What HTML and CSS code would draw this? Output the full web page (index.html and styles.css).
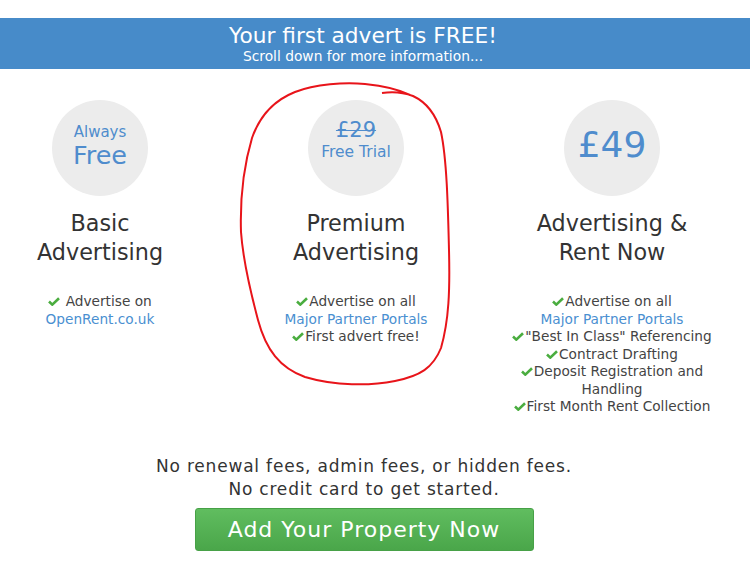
FILE: index.html
```html
<!DOCTYPE html>
<html>
<head>
<meta charset="utf-8">
<link rel="stylesheet" href="styles.css">
</head>
<body>
<div class="page">
  <div class="banner">
    <div class="banner-title">Your first advert is FREE!</div>
    <div class="banner-sub">Scroll down for more information...</div>
  </div>
  <div class="plans">
    <div class="plan">
      <div class="circle">
        <div class="c-small">Always</div>
        <div class="c-mid">Free</div>
      </div>
      <h2 class="plan-title">Basic<br>Advertising</h2>
      <ul class="features">
        <li><svg class="tick" viewBox="0 0 12 9"><path d="M1 4.5 L4.3 7.6 L11 1.2"/></svg> Advertise on</li>
        <li><a class="link">OpenRent.co.uk</a></li>
      </ul>
    </div>
    <div class="plan">
      <div class="circle">
        <div class="c-strike">£29</div>
        <div class="c-trial">Free Trial</div>
      </div>
      <h2 class="plan-title">Premium<br>Advertising</h2>
      <ul class="features">
        <li><svg class="tick" viewBox="0 0 12 9"><path d="M1 4.5 L4.3 7.6 L11 1.2"/></svg>Advertise on all</li>
        <li><a class="link">Major Partner Portals</a></li>
        <li><svg class="tick" viewBox="0 0 12 9"><path d="M1 4.5 L4.3 7.6 L11 1.2"/></svg>First advert free!</li>
      </ul>
    </div>
    <div class="plan">
      <div class="circle">
        <div class="c-big">£49</div>
      </div>
      <h2 class="plan-title">Advertising &amp;<br>Rent Now</h2>
      <ul class="features">
        <li><svg class="tick" viewBox="0 0 12 9"><path d="M1 4.5 L4.3 7.6 L11 1.2"/></svg>Advertise on all</li>
        <li><a class="link">Major Partner Portals</a></li>
        <li><svg class="tick" viewBox="0 0 12 9"><path d="M1 4.5 L4.3 7.6 L11 1.2"/></svg>"Best In Class" Referencing</li>
        <li><svg class="tick" viewBox="0 0 12 9"><path d="M1 4.5 L4.3 7.6 L11 1.2"/></svg>Contract Drafting</li>
        <li><svg class="tick" viewBox="0 0 12 9"><path d="M1 4.5 L4.3 7.6 L11 1.2"/></svg>Deposit Registration and Handling</li>
        <li><svg class="tick" viewBox="0 0 12 9"><path d="M1 4.5 L4.3 7.6 L11 1.2"/></svg>First Month Rent Collection</li>
      </ul>
    </div>
  </div>
  <div class="bottom">
    <p class="note">No renewal fees, admin fees, or hidden fees.<br>No credit card to get started.</p>
    <a class="cta">Add Your Property Now</a>
  </div>
  <svg class="scribble" width="750" height="579" viewBox="0 0 750 579">
    <path d="M382 93 C395 91 405 93 413 96 C428 103 436 115 441 132 C447 160 448 210 449 250 C450 290 449 320 441 348 C433 368 420 376 395 381 C370 386 335 386 305 377 C280 368 266 350 258 320 C250 290 243 260 241 232 C240 200 244 165 252 138 C260 115 275 100 295 92 C315 84 345 82 365 84 C385 86 400 90 410 95" fill="none" stroke="#e8141a" stroke-width="2"/>
  </svg>
</div>
</body>
</html>
```

FILE: styles.css
```css
* { box-sizing: border-box; }
html, body { margin: 0; padding: 0; background: #fff; }
body {
  font-family: "DejaVu Sans", "Open Sans", sans-serif;
  color: #333;
  width: 750px;
  height: 579px;
  overflow: hidden;
}
.page { position: relative; width: 750px; height: 579px; padding-top: 18px; }
.banner {
  background: #478bc9;
  color: #fff;
  text-align: center;
  height: 51px;
  padding-top: 5px;
  padding-right: 24px;
}
.banner-title { font-size: 21.7px; line-height: 25px; }
.banner-sub { font-size: 13.8px; line-height: 17px; }

.plans {
  display: grid;
  grid-template-columns: repeat(3, 256px);
  margin-left: -28px;
  margin-top: 31px;
}
.plan { display: flex; flex-direction: column; align-items: center; text-align: center; }
.circle {
  width: 96px; height: 96px; border-radius: 50%;
  background: #ececec;
  color: #4f8ccd;
  display: flex; flex-direction: column; align-items: center; justify-content: center;
}
.c-small { font-size: 15px; line-height: 18px; margin-top: -4px; }
.c-mid { font-size: 25.5px; line-height: 28px; }
.c-strike { font-size: 21px; line-height: 23px; text-decoration: line-through; text-decoration-thickness: 1px; margin-top: -15px; }
.c-trial { font-size: 15.5px; line-height: 20px; }
.c-big { font-size: 36px; line-height: 40px; margin-top: -6px; }

.plan-title {
  font-weight: normal;
  font-size: 22.3px;
  line-height: 29px;
  margin: 13px 0 0;
  color: #333;
}
.features {
  list-style: none; margin: 26px 0 0; padding: 0;
  font-size: 13.7px; line-height: 17.5px; color: #444;
  width: 212px;
}
.features li { line-height: 17.5px; }
.tick {
  width: 12px; height: 9px;
  fill: none; stroke: #4aad3f; stroke-width: 2.6;
  vertical-align: 0;
  margin-right: 1px;
}
.link { color: #4a8fd1; }

.bottom { text-align: center; margin-top: 39px; padding-right: 22px; }
.note { font-size: 17px; line-height: 23px; margin: 0; color: #333; letter-spacing: 0.8px; }
.cta {
  display: inline-block;
  margin-top: 7px;
  width: 339px; height: 43px;
  line-height: 41px;
  background: linear-gradient(#60bd5f, #4aa64a);
  border: 1px solid #47a147;
  border-radius: 3px;
  color: #fff;
  font-size: 22px;
  letter-spacing: 1px;
}
.scribble { position: absolute; left: 0; top: 0; pointer-events: none; }
```
